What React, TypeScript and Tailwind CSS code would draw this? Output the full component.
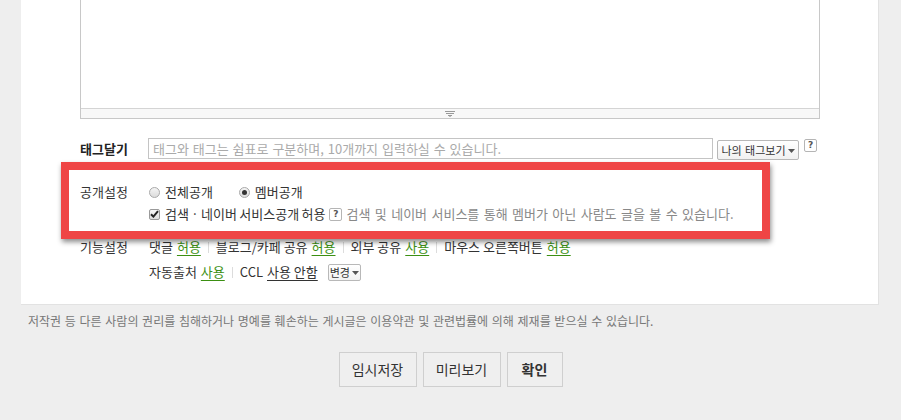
import React from "react";

const Caret = () => (
  <svg width="7" height="4" viewBox="0 0 7 4" className="ml-[2px] mt-[1px]">
    <path d="M0 0 L7 0 L3.5 4z" fill="#555" />
  </svg>
);

const Help = ({ className = "" }: { className?: string }) => (
  <span
    className={`inline-flex items-center justify-center w-[13px] h-[13px] border border-[#b5b5b5] rounded-[2px] bg-white text-[9px] font-bold leading-none text-[#555] font-['DejaVu_Sans',sans-serif] ${className}`}
  >
    ?
  </span>
);

const Sep = () => <span className="w-px h-[11px] bg-[#dcdcdc] mx-[7px]" />;

const G = ({ children }: { children: React.ReactNode }) => (
  <span className="ml-[4px] text-[#3b8f12] underline underline-offset-[3px]">{children}</span>
);

const Radio = ({ checked }: { checked?: boolean }) => (
  <span className="w-[11px] h-[11px] rounded-full border border-[#a9a9a9] bg-gradient-to-b from-[#f4f4f4] to-[#dcdcdc] flex items-center justify-center">
    {checked && <span className="w-[5px] h-[5px] rounded-full bg-[#333]" />}
  </span>
);

const Check = () => (
  <span className="w-[11px] h-[11px] rounded-[2px] border border-[#9a9a9a] bg-gradient-to-b from-[#f6f6f6] to-[#dedede] flex items-center justify-center">
    <svg width="9" height="8" viewBox="0 0 9 8">
      <path d="M1 4.2 L3.4 6.6 L8 1.2" stroke="#222" strokeWidth="2" fill="none" />
    </svg>
  </span>
);

export default function App() {
  return (
    <div className="relative w-[901px] h-[420px] overflow-hidden bg-[#eeeeee] text-[13px] text-[#333] font-['Noto_Sans_CJK_KR',sans-serif]">
      <div className="ml-[21px] w-[858px] h-[305px] bg-white border-r border-b border-[#e2e2e2] pl-[59px]">
        {/* editor bottom */}
        <div className="w-[740px] h-[119px] border-x border-b border-[#c8c8c8] flex flex-col">
          <div className="flex-1" />
          <div className="h-[10px] border-t border-[#d4d4d4] bg-[#f8f8f8] flex items-center justify-center">
            <svg width="10" height="6" viewBox="0 0 10 6">
              <rect x="0" y="0" width="10" height="1" fill="#999" />
              <rect x="1" y="2" width="8" height="1" fill="#999" />
              <rect x="3" y="4" width="4" height="1" fill="#999" />
              <rect x="4" y="5" width="2" height="1" fill="#bbb" />
            </svg>
          </div>
        </div>

        {/* tags */}
        <div className="mt-[19px] flex items-start">
          <div className="w-[68px] h-[21px] flex items-center font-bold leading-[20px] text-[13px] text-[#222]">태그달기</div>
          <div className="w-[565px] h-[21px] border border-[#c4c4c4] pl-[4px] flex items-center text-[#aaa] leading-[20px] [word-spacing:1px]">
            태그와 태그는 쉼표로 구분하며, 10개까지 입력하실 수 있습니다.
          </div>
          <div className="ml-[4px] mt-[2px] w-[82px] h-[20px] border border-[#b8b8b8] rounded-[2px] bg-gradient-to-b from-white to-[#f1f1f1] flex items-center justify-center text-[11px] leading-[18px] [word-spacing:1px]">
            나의 태그보기
            <Caret />
          </div>
          <Help className="ml-[5px] mt-[1px]" />
        </div>

        {/* public settings */}
        <div className="mt-[22px] flex items-start">
          <div className="w-[68px] h-[20px] flex items-center leading-[20px] text-[#333]">공개설정</div>
          <div className="flex flex-col">
            <div className="h-[20px] flex items-center leading-[20px] pl-[1px]">
              <Radio />
              <span className="ml-[5px]">전체공개</span>
              <span className="ml-[26px]" />
              <Radio checked />
              <span className="ml-[5px]">멤버공개</span>
            </div>
            <div className="mt-[2px] h-[20px] flex items-center leading-[20px] pl-[1px]">
              <Check />
              <span className="ml-[5px] [word-spacing:-0.5px]">검색 · 네이버 서비스공개 허용</span>
              <Help className="ml-[4px]" />
              <span className="ml-[4px] text-[#888] [word-spacing:1.5px]">
                검색 및 네이버 서비스를 통해 멤버가 아닌 사람도 글을 볼 수 있습니다.
              </span>
            </div>
          </div>
        </div>

        {/* feature settings */}
        <div className="mt-[13px] flex items-start">
          <div className="w-[68px] h-[20px] flex items-center leading-[20px] text-[#333]">기능설정</div>
          <div className="flex flex-col pl-[1px]">
            <div className="h-[20px] flex items-center leading-[20px]">
              <span>댓글</span>
              <G>허용</G>
              <Sep />
              <span>블로그/카페 공유</span>
              <G>허용</G>
              <Sep />
              <span>외부 공유</span>
              <G>사용</G>
              <Sep />
              <span>마우스 오른쪽버튼</span>
              <G>허용</G>
            </div>
            <div className="mt-[5px] h-[20px] flex items-center leading-[20px]">
              <span>자동출처</span>
              <G>사용</G>
              <Sep />
              <span>CCL</span>
              <span className="ml-[4px] underline underline-offset-[3px]">사용 안함</span>
              <div className="ml-[10px] w-[33px] h-[17px] border border-[#b8b8b8] rounded-[2px] bg-gradient-to-b from-white to-[#f1f1f1] flex items-center justify-center text-[11px] leading-[15px]">
                변경
                <Caret />
              </div>
            </div>
          </div>
        </div>
      </div>

      <p className="mt-[8px] ml-[28px] text-[12px] leading-[16px] text-[#777] [word-spacing:1px]">
        저작권 등 다른 사람의 권리를 침해하거나 명예를 훼손하는 게시글은 이용약관 및 관련법률에 의해 제재를 받으실 수 있습니다.
      </p>

      <div className="mt-[23px] flex justify-center gap-[6px]">
        <button className="w-[78px] h-[35px] border border-[#cfcfcf] bg-[#efefef] text-[14px] text-[#333]">임시저장</button>
        <button className="w-[78px] h-[35px] border border-[#cfcfcf] bg-[#efefef] text-[14px] text-[#333]">미리보기</button>
        <button className="w-[56px] h-[35px] border border-[#cfcfcf] bg-[#efefef] text-[14px] font-bold text-[#333]">확인</button>
      </div>

      {/* annotation box */}
      <div className="absolute left-[61px] top-[162px] w-[709px] h-[77px] border-[8px] border-[#ef4545] shadow-[1px_3px_5px_rgba(0,0,0,0.45)]" />
    </div>
  );
}
